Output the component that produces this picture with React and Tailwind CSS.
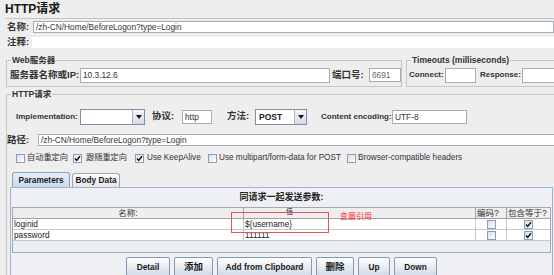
const Check = ({ checked }) => (
  <span className="inline-flex w-[9px] h-[9px] shrink-0 items-center justify-center border border-[#8a9eb5] bg-linear-to-br from-[#d6dfea] to-white">
    {checked && (
      <svg width="7" height="7" viewBox="0 0 7 7">
        <path d="M1 3.6 L2.7 5.4 L6 1.2" stroke="#111" strokeWidth="1.5" fill="none" />
      </svg>
    )}
  </span>
);

const Select = ({ value, className }) => (
  <div className={`flex h-[16px] border border-[#7f8fa3] bg-white ${className}`}>
    <span className="flex-1 pl-[3px] text-[8.5px] font-bold leading-[14px] text-[#222]">{value}</span>
    <span className="flex w-[12px] items-center justify-center border-l border-[#a9b6c5] bg-linear-to-b from-[#f6f8fb] to-[#d0dae6]">
      <svg width="6" height="4" viewBox="0 0 6 4">
        <path d="M0 0H6L3 4Z" fill="#111" />
      </svg>
    </span>
  </div>
);

const Field = ({ value, className }) => (
  <div className={`border border-[#a3adb9] bg-white pl-[2px] text-[8.3px] leading-[10px] text-[#333] ${className}`}>
    {value}
  </div>
);

const Btn = ({ children, className }) => (
  <div
    className={`flex h-[20px] items-center justify-center rounded-[2px] border border-[#8499b4] bg-linear-to-b from-white to-[#cfdae7] text-[8.3px] font-bold text-[#1a1a1a] ${className}`}
  >
    {children}
  </div>
);

const Legend = ({ children }) => (
  <legend className="ml-[4px] px-[1px] text-[8.5px] font-bold leading-[12px] text-[#333]">{children}</legend>
);

const cell = 'border-r border-[#c4c8ce] leading-[10px]';

export default function App() {
  return (
    <div className="relative h-[275px] w-[554px] overflow-hidden bg-[#eeeeee] font-['Liberation_Sans','Noto_Sans_CJK_SC',sans-serif] text-[#1a1a1a]">
      {/* title */}
      <div className="h-[18px] pl-[5px] pt-[2px] text-[12px] font-bold leading-[15px]">HTTP请求</div>

      {/* name / comment */}
      <div className="ml-[5px] flex h-[16px] items-center border-t border-[#c4c4c4]">
        <span className="w-[28px] pl-[2px] text-[9.5px] font-bold leading-[12px] text-[#333]">名称:</span>
        <Field value="/zh-CN/Home/BeforeLogon?type=Login" className="h-[12px] flex-1" />
      </div>
      <div className="ml-[5px] flex h-[16px] items-center">
        <span className="w-[27px] pl-[2px] text-[9.5px] font-bold leading-[12px] text-[#333]">注释:</span>
        <div className="h-[11px] flex-1 bg-white" />
      </div>

      {/* web server + timeouts */}
      <div className="mt-[4px] flex">
        <fieldset className="ml-[6px] w-[397px] border border-[#c6c6c6]">
          <Legend>Web服务器</Legend>
          <div className="mb-[2px] flex h-[18px] items-center pl-[3px]">
            <span className="w-[70px] text-[9.5px] font-bold leading-[12px] text-[#333]">服务器名称或IP:</span>
            <Field value="10.3.12.6" className="h-[15px] w-[250px] leading-[13px]" />
            <span className="ml-[2px] w-[37px] text-[9.5px] font-bold leading-[12px] text-[#333]">端口号:</span>
            <Field value="6691" className="h-[14px] w-[32px] leading-[12px] text-[#666]" />
          </div>
        </fieldset>
        <fieldset className="ml-[4px] w-[160px] border border-[#c6c6c6]">
          <Legend>Timeouts (milliseconds)</Legend>
          <div className="mb-[2px] flex h-[18px] items-center pl-[2px]">
            <span className="w-[36px] text-[8px] font-bold text-[#333]">Connect:</span>
            <Field value="" className="h-[15px] w-[31px]" />
            <span className="ml-[4px] w-[42px] text-[8px] font-bold text-[#333]">Response:</span>
            <Field value="" className="h-[15px] w-[40px]" />
          </div>
        </fieldset>
      </div>

      {/* http request */}
      <fieldset className="ml-[6px] mt-[1px] w-[560px] border border-[#c6c6c6]">
        <Legend>HTTP请求</Legend>

        <div className="flex h-[33px] items-center pl-[9px] text-[#333]">
          <span className="w-[64px] text-[8px] font-bold">Implementation:</span>
          <Select value="" className="w-[65px]" />
          <span className="ml-[7px] w-[30px] text-[9.5px] font-bold">协议:</span>
          <Field value="http" className="h-[14px] w-[30px] leading-[12px]" />
          <span className="ml-[15px] w-[28px] text-[9.5px] font-bold">方法:</span>
          <Select value="POST" className="w-[52px]" />
          <span className="ml-[14px] w-[71px] text-[8px] font-bold">Content encoding:</span>
          <Field value="UTF-8" className="h-[14px] w-[75px] leading-[12px]" />
        </div>

        <div className="flex h-[13px] items-center">
          <span className="w-[31px] text-[9.5px] font-bold leading-[12px] text-[#333]">路径:</span>
          <Field value="/zh-CN/Home/BeforeLogon?type=Login" className="h-[12px] flex-1" />
        </div>

        <div className="flex h-[25px] items-center pl-[9px] text-[8.2px] text-[#333]">
          <div className="flex w-[57px] items-center gap-[2px]">
            <Check />
            <span>自动重定向</span>
          </div>
          <div className="flex w-[62px] items-center gap-[4px]">
            <Check checked />
            <span>跟随重定向</span>
          </div>
          <div className="flex w-[73px] items-center gap-[3px]">
            <Check checked />
            <span>Use KeepAlive</span>
          </div>
          <div className="flex w-[139px] items-center gap-[2px]">
            <Check />
            <span>Use multipart/form-data for POST</span>
          </div>
          <div className="flex items-center gap-[2px]">
            <Check />
            <span>Browser-compatible headers</span>
          </div>
        </div>

        {/* tabs */}
        <div className="ml-[5px] flex h-[16px] items-end">
          <div className="flex h-[15px] w-[58px] items-center justify-center rounded-t-[3px] border border-b-0 border-[#8aa0bd] bg-linear-to-b from-[#e6eef7] to-[#c9d9ec] text-[8.3px] font-bold">
            Parameters
          </div>
          <div className="ml-[2px] flex h-[14px] w-[48px] items-center justify-center rounded-t-[3px] border border-b-0 border-[#9aa7b5] bg-linear-to-b from-[#fafafa] to-[#e6e6e6] text-[8.3px] font-bold">
            Body Data
          </div>
        </div>

        <div className="ml-[3px] h-[120px] w-[543px] border border-[#9fb3cc] bg-[#eef0f3]">
          <div className="flex h-[19px] items-center justify-center text-[9px] font-bold text-[#222]">同请求一起发送参数:</div>

          <div className="mx-[1px] h-[46px] border border-[#9ea9b6] bg-[#eceef1] text-[8.3px]">
            <div className="grid h-[11px] grid-cols-[231px_232px_31px_1fr] border-b border-[#a0a0a0] bg-[#eeeeee] text-[8.5px] leading-[10px] text-[#333]">
              <div className="border-r border-[#a0a0a0] text-center">名称:</div>
              <div className="border-r border-[#a0a0a0] pl-[42px] text-[7px] leading-[7px]">值</div>
              <div className="border-r border-[#a0a0a0] pl-[1px]">编码?</div>
              <div className="pl-[1px]">包含等于?</div>
            </div>
            <div className="grid h-[11px] grid-cols-[231px_232px_31px_1fr] border-b border-[#c4c8ce] bg-white">
              <div className={`${cell} pl-[1px]`}>loginid</div>
              <div className={`${cell} pl-[1px]`}>{'${username}'}</div>
              <div className="flex items-center justify-center border-r border-[#c4c8ce]">
                <Check />
              </div>
              <div className="flex items-center justify-center">
                <Check checked />
              </div>
            </div>
            <div className="grid h-[11px] grid-cols-[231px_232px_31px_1fr] border-b border-[#c4c8ce] bg-white">
              <div className={`${cell} pl-[1px]`}>password</div>
              <div className={`${cell} pl-[1px]`}>111111</div>
              <div className="flex items-center justify-center border-r border-[#c4c8ce]">
                <Check />
              </div>
              <div className="flex items-center justify-center">
                <Check checked />
              </div>
            </div>
          </div>

          <div className="mt-[4px] flex justify-center gap-[4px]">
            <Btn className="w-[44px]">Detail</Btn>
            <Btn className="w-[39px] text-[9.5px]">添加</Btn>
            <Btn className="w-[95px]">Add from Clipboard</Btn>
            <Btn className="w-[38px] text-[9.5px]">删除</Btn>
            <Btn className="w-[32px]">Up</Btn>
            <Btn className="w-[43px]">Down</Btn>
          </div>
        </div>
      </fieldset>

      {/* annotation */}
      <div className="absolute left-[231px] top-[212px] h-[21px] w-[98px] border border-[#e25555]" />
      <div className="absolute left-[340px] top-[212px] text-[8px] leading-[10px] text-[#ff2a2a]">变量引用</div>
    </div>
  );
}
